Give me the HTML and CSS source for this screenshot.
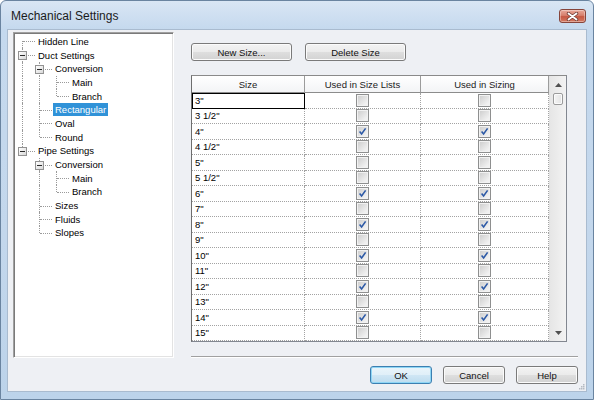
FILE: index.html
```html
<!DOCTYPE html>
<html>
<head>
<meta charset="utf-8">
<link rel="stylesheet" href="styles.css">
</head>
<body>
<div class="window">
  <div class="titlebar">
    <span class="title">Mechanical Settings</span>
    <span class="close"><svg width="13" height="9" viewBox="0 0 13 9"><path d="M2.5 1.5 L10.5 7.5 M10.5 1.5 L2.5 7.5" stroke="#6d3a33" stroke-width="3.4" stroke-linecap="round"/><path d="M2.5 1.5 L10.5 7.5 M10.5 1.5 L2.5 7.5" stroke="#fff" stroke-width="1.8" stroke-linecap="round"/></svg></span>
  </div>
  <div class="client">
    <div class="main">
      <div class="tree">
        <div class="node"><span class="c first"></span><span class="lbl">Hidden Line</span></div>
        <div class="node"><span class="c tee"><i class="box"></i></span><span class="lbl">Duct Settings</span></div>
        <div class="node"><span class="g pipe"></span><span class="c tee"><i class="box"></i></span><span class="lbl">Conversion</span></div>
        <div class="node"><span class="g pipe"></span><span class="g pipe"></span><span class="c tee"></span><span class="lbl">Main</span></div>
        <div class="node"><span class="g pipe"></span><span class="g pipe"></span><span class="c elbow"></span><span class="lbl">Branch</span></div>
        <div class="node"><span class="g pipe"></span><span class="c tee"></span><span class="lbl sel">Rectangular</span></div>
        <div class="node"><span class="g pipe"></span><span class="c tee"></span><span class="lbl">Oval</span></div>
        <div class="node"><span class="g pipe"></span><span class="c elbow"></span><span class="lbl">Round</span></div>
        <div class="node"><span class="c elbow"><i class="box"></i></span><span class="lbl">Pipe Settings</span></div>
        <div class="node"><span class="g"></span><span class="c tee"><i class="box"></i></span><span class="lbl">Conversion</span></div>
        <div class="node"><span class="g"></span><span class="g pipe"></span><span class="c tee"></span><span class="lbl">Main</span></div>
        <div class="node"><span class="g"></span><span class="g pipe"></span><span class="c elbow"></span><span class="lbl">Branch</span></div>
        <div class="node"><span class="g"></span><span class="c tee"></span><span class="lbl">Sizes</span></div>
        <div class="node"><span class="g"></span><span class="c tee"></span><span class="lbl">Fluids</span></div>
        <div class="node"><span class="g"></span><span class="c elbow"></span><span class="lbl">Slopes</span></div>
      </div>
      <div class="panel">
        <div class="tools">
          <button class="btn wide">New Size...</button>
          <button class="btn wide">Delete Size</button>
        </div>
        <div class="grid">
          <div class="table">
            <div class="th">Size</div><div class="th">Used in Size Lists</div><div class="th">Used in Sizing</div>

            <div class="td size focus">3&quot;</div><div class="td"><span class="cb"></span></div><div class="td"><span class="cb"></span></div>
            <div class="td size">3 1/2&quot;</div><div class="td"><span class="cb"></span></div><div class="td"><span class="cb"></span></div>
            <div class="td size">4&quot;</div><div class="td"><span class="cb on"><svg viewBox="0 0 9 9"><path d="M1.6 4.6 L3.6 7 L7.6 1.4" stroke="#2c59a6" stroke-width="1.6" fill="none"/></svg></span></div><div class="td"><span class="cb on"><svg viewBox="0 0 9 9"><path d="M1.6 4.6 L3.6 7 L7.6 1.4" stroke="#2c59a6" stroke-width="1.6" fill="none"/></svg></span></div>
            <div class="td size">4 1/2&quot;</div><div class="td"><span class="cb"></span></div><div class="td"><span class="cb"></span></div>
            <div class="td size">5&quot;</div><div class="td"><span class="cb"></span></div><div class="td"><span class="cb"></span></div>
            <div class="td size">5 1/2&quot;</div><div class="td"><span class="cb"></span></div><div class="td"><span class="cb"></span></div>
            <div class="td size">6&quot;</div><div class="td"><span class="cb on"><svg viewBox="0 0 9 9"><path d="M1.6 4.6 L3.6 7 L7.6 1.4" stroke="#2c59a6" stroke-width="1.6" fill="none"/></svg></span></div><div class="td"><span class="cb on"><svg viewBox="0 0 9 9"><path d="M1.6 4.6 L3.6 7 L7.6 1.4" stroke="#2c59a6" stroke-width="1.6" fill="none"/></svg></span></div>
            <div class="td size">7&quot;</div><div class="td"><span class="cb"></span></div><div class="td"><span class="cb"></span></div>
            <div class="td size">8&quot;</div><div class="td"><span class="cb on"><svg viewBox="0 0 9 9"><path d="M1.6 4.6 L3.6 7 L7.6 1.4" stroke="#2c59a6" stroke-width="1.6" fill="none"/></svg></span></div><div class="td"><span class="cb on"><svg viewBox="0 0 9 9"><path d="M1.6 4.6 L3.6 7 L7.6 1.4" stroke="#2c59a6" stroke-width="1.6" fill="none"/></svg></span></div>
            <div class="td size">9&quot;</div><div class="td"><span class="cb"></span></div><div class="td"><span class="cb"></span></div>
            <div class="td size">10&quot;</div><div class="td"><span class="cb on"><svg viewBox="0 0 9 9"><path d="M1.6 4.6 L3.6 7 L7.6 1.4" stroke="#2c59a6" stroke-width="1.6" fill="none"/></svg></span></div><div class="td"><span class="cb on"><svg viewBox="0 0 9 9"><path d="M1.6 4.6 L3.6 7 L7.6 1.4" stroke="#2c59a6" stroke-width="1.6" fill="none"/></svg></span></div>
            <div class="td size">11&quot;</div><div class="td"><span class="cb"></span></div><div class="td"><span class="cb"></span></div>
            <div class="td size">12&quot;</div><div class="td"><span class="cb on"><svg viewBox="0 0 9 9"><path d="M1.6 4.6 L3.6 7 L7.6 1.4" stroke="#2c59a6" stroke-width="1.6" fill="none"/></svg></span></div><div class="td"><span class="cb on"><svg viewBox="0 0 9 9"><path d="M1.6 4.6 L3.6 7 L7.6 1.4" stroke="#2c59a6" stroke-width="1.6" fill="none"/></svg></span></div>
            <div class="td size">13&quot;</div><div class="td"><span class="cb"></span></div><div class="td"><span class="cb"></span></div>
            <div class="td size">14&quot;</div><div class="td"><span class="cb on"><svg viewBox="0 0 9 9"><path d="M1.6 4.6 L3.6 7 L7.6 1.4" stroke="#2c59a6" stroke-width="1.6" fill="none"/></svg></span></div><div class="td"><span class="cb on"><svg viewBox="0 0 9 9"><path d="M1.6 4.6 L3.6 7 L7.6 1.4" stroke="#2c59a6" stroke-width="1.6" fill="none"/></svg></span></div>
            <div class="td size">15&quot;</div><div class="td"><span class="cb"></span></div><div class="td"><span class="cb"></span></div>
          </div>
          <div class="sb">
            <div class="sb-btn"><svg width="7" height="4" viewBox="0 0 7 4"><path d="M0 4 L3.5 0 L7 4 Z" fill="#505050"/></svg></div>
            <div class="sb-track"><div class="thumb"></div></div>
            <div class="sb-btn"><svg width="7" height="4" viewBox="0 0 7 4"><path d="M0 0 L7 0 L3.5 4 Z" fill="#505050"/></svg></div>
          </div>
        </div>
        <div class="sep"></div>
      </div>
    </div>
    <div class="footer">
      <button class="btn ok">OK</button>
      <button class="btn">Cancel</button>
      <button class="btn">Help</button>
    </div>
    <svg class="grip" width="7" height="7" viewBox="0 0 7 7"><g fill="#b5bac2"><rect x="5" y="1" width="1.5" height="1.5"/><rect x="3" y="3" width="1.5" height="1.5"/><rect x="5" y="3" width="1.5" height="1.5"/><rect x="1" y="5" width="1.5" height="1.5"/><rect x="3" y="5" width="1.5" height="1.5"/><rect x="5" y="5" width="1.5" height="1.5"/></g></svg>
  </div>
</div>
</body>
</html>
```
FILE: styles.css
```css
html, body {
  margin: 0;
  padding: 0;
  background: #ffffff;
}
body {
  width: 594px;
  height: 400px;
  overflow: hidden;
  font-family: "Liberation Sans", Arial, sans-serif;
  font-size: 9.5px;
  color: #000;
}
.window {
  width: 594px;
  height: 400px;
  box-sizing: border-box;
  border: 1px solid #6a84a0;
  border-radius: 6px 6px 0 0;
  background: linear-gradient(#d9e6f4, #c5d9ee 28px, #c3d7ec 60%, #bcd3ea);
  padding: 0 6px 7px 6px;
  display: flex;
  flex-direction: column;
}
.titlebar {
  height: 28px;
  flex: none;
  display: flex;
  align-items: center;
  justify-content: space-between;
  padding-left: 4px;
}
.title {
  font-size: 12px;
  color: #1b1b1b;
  margin-top: 1px;
}
.close {
  width: 27px;
  height: 14px;
  box-sizing: border-box;
  margin: 2px 1px 0 0;
  border: 1px solid #86453b;
  border-radius: 3px;
  background: linear-gradient(#e9a99b, #d7806d 45%, #c65843 55%, #d47a62);
  box-shadow: inset 0 0 0 1px rgba(255,255,255,0.35);
  display: flex;
  align-items: center;
  justify-content: center;
}
.client {
  position: relative;
  flex: 1;
  border: 1px solid #a9bbcf;
  background: #eef0f4;
  display: flex;
  flex-direction: column;
}
.main {
  display: flex;
  padding: 2px 0 0 5px;
}
.tree {
  width: 161px;
  height: 326px;
  box-sizing: border-box;
  border: 1px solid;
  border-color: #a0a0a0 #ffffff #ffffff #a0a0a0;
  box-shadow: inset 1px 1px 0 #7a7a7a, inset -1px -1px 0 #e3e3e3;
  background: #fff;
  padding-top: 1.5px;
  flex: none;
}
.node {
  display: flex;
  height: 13.7px;
  align-items: stretch;
}
.g, .c {
  position: relative;
  flex: none;
}
.g { width: 17px; }
.c { width: 22px; }
.g.pipe::before, .c::before {
  content: "";
  position: absolute;
  left: 8px;
  top: 0;
  bottom: 0;
  border-left: 1px dotted #9a9a9a;
}
.c.first::before { top: 50%; }
.c.elbow::before { bottom: 50%; }
.c::after {
  content: "";
  position: absolute;
  left: 9px;
  right: 1px;
  top: 50%;
  border-top: 1px dotted #9a9a9a;
}
.box {
  position: absolute;
  left: 4px;
  top: 50%;
  margin-top: -4px;
  width: 9px;
  height: 9px;
  box-sizing: border-box;
  border: 1px solid #929292;
  background: linear-gradient(135deg, #ffffff, #d8d8d8);
  z-index: 1;
}
.box::after {
  content: "";
  position: absolute;
  left: 1px;
  right: 1px;
  top: 3px;
  height: 1px;
  background: #2a2a2a;
}
.lbl {
  align-self: center;
  height: 13px;
  line-height: 13px;
  padding: 0 2px;
  white-space: nowrap;
  color: #000;
}
.lbl.sel {
  background: #3092d8;
  color: #fff;
}
.panel {
  width: 397px;
  height: 326px;
  margin-left: 7px;
  box-sizing: border-box;
  padding: 11px 0 0 10px;
  display: flex;
  flex-direction: column;
  flex: none;
}
.tools {
  display: flex;
  gap: 13px;
}
.btn {
  font-family: "Liberation Sans", Arial, sans-serif;
  font-size: 9.5px;
  color: #111;
  height: 18px;
  width: 62px;
  padding: 0;
  box-sizing: border-box;
  border: 1px solid #7a7a7a;
  border-radius: 3px;
  background: linear-gradient(#f3f3f3, #ebebeb 48%, #dedede 52%, #d2d2d2);
  box-shadow: inset 0 0 0 1px #fbfbfb;
}
.btn.wide { width: 101px; }
.btn.ok {
  border-color: #3c7fb1;
  box-shadow: inset 0 0 0 1px #8ed6f5;
  background: linear-gradient(#eaf5fb, #e0eff8 48%, #cfe6f4 52%, #bddcef);
}
.grid {
  margin-top: 14px;
  width: 376px;
  height: 267px;
  box-sizing: border-box;
  border: 1px solid #828790;
  border-left-color: #6e6e6e;
  border-top-color: #8a8a8a;
  background: #fff;
  display: flex;
}
.table {
  width: 357px;
  display: grid;
  grid-template-columns: 113px 116px 128px;
  grid-template-rows: 17px repeat(16, 1fr);
}
.th {
  box-sizing: border-box;
  border-right: 1px solid #9c9c9c;
  border-bottom: 1px solid #8c8c8c;
  background: linear-gradient(#ffffff, #f3f4f6);
  display: flex;
  align-items: center;
  justify-content: center;
  color: #1a1a1a;
}
.td {
  box-sizing: border-box;
  border-right: 1px dotted #a3a3a3;
  border-bottom: 1px dotted #a3a3a3;
  display: flex;
  align-items: center;
  justify-content: center;
  min-height: 0;
}
.td.size {
  justify-content: flex-start;
  padding-left: 3px;
}
.td.focus {
  outline: 1px solid #000;
  outline-offset: -1px;
}
.cb {
  width: 13px;
  height: 13px;
  box-sizing: border-box;
  border: 1px solid #8e8f8f;
  background: linear-gradient(135deg, #cbcbcb, #f1f1f1 80%);
  box-shadow: inset 0 0 0 1px #f2f2f2;
  display: flex;
  align-items: center;
  justify-content: center;
}
.cb svg {
  width: 9px;
  height: 9px;
}
.sb {
  width: 17px;
  display: flex;
  flex-direction: column;
  background: linear-gradient(to right, #e6e6e6, #f3f3f3);
  border-left: 1px solid #e2e2e2;
  box-sizing: border-box;
}
.sb-btn {
  height: 17px;
  flex: none;
  display: flex;
  align-items: center;
  justify-content: center;
}
.sb-track {
  flex: 1;
  padding: 0 3px;
}
.thumb {
  height: 12px;
  box-sizing: border-box;
  border: 1px solid #9b9b9b;
  border-radius: 2px;
  background: linear-gradient(to right, #f4f4f4, #e4e4e4);
  box-shadow: inset 0 0 0 1px #fbfbfb;
}
.sep {
  margin-top: auto;
  height: 1px;
  background: #a0a0a0;
  border-bottom: 1px solid #ffffff;
}
.footer {
  display: flex;
  justify-content: flex-end;
  gap: 11px;
  padding: 8px 8px 0 0;
}
.grip {
  position: absolute;
  right: 1px;
  bottom: 1px;
}
```
